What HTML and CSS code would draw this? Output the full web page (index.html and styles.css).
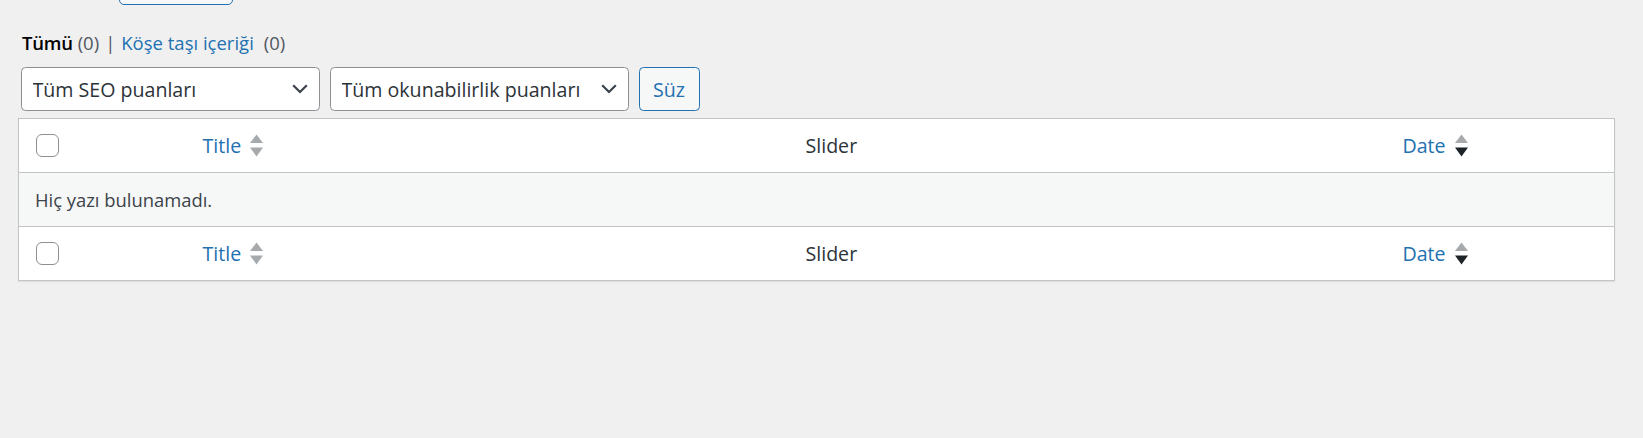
FILE: index.html
```html
<!DOCTYPE html>
<html lang="tr">
<head>
<meta charset="utf-8">
<title>Köşe taşı içeriği</title>
<link rel="stylesheet" href="styles.css">
</head>
<body>
<div class="wrap">
  <div class="title-row">
    <a class="page-title-action" href="#" aria-label="Yeni ekle"></a>
  </div>

  <ul class="subsubsub">
    <li><a class="current" href="#">Tümü</a> <span class="count">(0)</span></li>
    <li class="sep">|</li>
    <li><a href="#">Köşe taşı içeriği</a><span class="count gap">(0)</span></li>
  </ul>

  <div class="tablenav">
    <div class="select-wrap">
      <select class="filter">
        <option>Tüm SEO puanları</option>
      </select>
      <svg class="chev" width="16" height="10" viewBox="0 0 16 10"><path d="M1.2 1.2 L8 8 L14.8 1.2" fill="none" stroke="#3c434a" stroke-width="2.2"/></svg>
    </div>
    <div class="select-wrap">
      <select class="filter">
        <option>Tüm okunabilirlik puanları</option>
      </select>
      <svg class="chev" width="16" height="10" viewBox="0 0 16 10"><path d="M1.2 1.2 L8 8 L14.8 1.2" fill="none" stroke="#3c434a" stroke-width="2.2"/></svg>
    </div>
    <button class="button" type="button">Süz</button>
  </div>

  <table class="list">
    <colgroup>
      <col class="c-cb">
      <col class="c-title">
      <col class="c-slider">
      <col>
    </colgroup>
    <thead>
      <tr>
        <td class="check"><span class="cb"></span></td>
        <th><a class="sort" href="#"><span>Title</span>
          <svg width="13" height="23" viewBox="0 0 13 23"><polygon points="0,9 6.5,0.5 13,9" fill="#a7aaad"/><polygon points="0,13.5 13,13.5 6.5,22.5" fill="#a7aaad"/></svg></a></th>
        <th class="plain">Slider</th>
        <th><a class="sort" href="#"><span>Date</span>
          <svg width="13" height="23" viewBox="0 0 13 23"><polygon points="0,9 6.5,0.5 13,9" fill="#a7aaad"/><polygon points="0,13.5 13,13.5 6.5,22.5" fill="#1d2327"/></svg></a></th>
      </tr>
    </thead>
    <tbody>
      <tr class="empty"><td colspan="4">Hiç yazı bulunamadı.</td></tr>
    </tbody>
    <tfoot>
      <tr>
        <td class="check"><span class="cb"></span></td>
        <th><a class="sort" href="#"><span>Title</span>
          <svg width="13" height="23" viewBox="0 0 13 23"><polygon points="0,9 6.5,0.5 13,9" fill="#a7aaad"/><polygon points="0,13.5 13,13.5 6.5,22.5" fill="#a7aaad"/></svg></a></th>
        <th class="plain">Slider</th>
        <th><a class="sort" href="#"><span>Date</span>
          <svg width="13" height="23" viewBox="0 0 13 23"><polygon points="0,9 6.5,0.5 13,9" fill="#a7aaad"/><polygon points="0,13.5 13,13.5 6.5,22.5" fill="#1d2327"/></svg></a></th>
      </tr>
    </tfoot>
  </table>
</div>
</body>
</html>
```

FILE: styles.css
```css
html, body {
  margin: 0;
  padding: 0;
  background: #f0f0f1;
}

body {
  font-family: "Open Sans", "Noto Sans", sans-serif;
  color: #3c434a;
  height: 438px;
  overflow: hidden;
}

.wrap {
  padding-left: 18px;
  width: 1597px;
}

a {
  color: #2271b1;
  text-decoration: none;
}

.title-row {
  height: 5px;
  display: flex;
  align-items: flex-end;
}

.page-title-action {
  display: block;
  flex: none;
  margin-left: 101px;
  width: 114px;
  height: 43px;
  box-sizing: border-box;
  border: 1.5px solid #2271b1;
  border-radius: 5px;
  background: #f6f7f7;
}

.subsubsub {
  list-style: none;
  margin: 0;
  padding: 23px 0 0 4px;
  display: flex;
  align-items: flex-start;
  font-size: 18.5px;
  line-height: 30px;
  box-sizing: border-box;
  height: 62px;
  color: #50575e;
}

.subsubsub li {
  white-space: pre;
}

.subsubsub .current {
  color: #000;
  font-weight: 600;
  letter-spacing: -0.2px;
}

.subsubsub .sep {
  padding: 0 6px 0 6px;
}

.subsubsub .count {
  color: #50575e;
}

.subsubsub .gap {
  margin-left: 10px;
}

.tablenav {
  display: flex;
  gap: 10px;
  padding-left: 2.5px;
  height: 51px;
}

.select-wrap {
  position: relative;
  width: 299px;
  height: 44px;
}

.filter {
  appearance: none;
  -webkit-appearance: none;
  width: 100%;
  height: 100%;
  box-sizing: border-box;
  margin: 0;
  padding: 0 36px 0 11px;
  border: 1.5px solid #8c8f94;
  border-radius: 4.5px;
  background: #fff;
  color: #2c3338;
  font-family: "Open Sans", "Noto Sans", sans-serif;
  font-size: 19.6px;
}

.chev {
  position: absolute;
  right: 12px;
  top: 17px;
  pointer-events: none;
}

.button {
  height: 44px;
  width: 61px;
  margin-left: 0;
  box-sizing: border-box;
  padding: 0;
  border: 1.5px solid #2271b1;
  border-radius: 4.5px;
  background: #f6f7f7;
  color: #2271b1;
  font-family: "Open Sans", "Noto Sans", sans-serif;
  font-size: 19.6px;
}

.list {
  width: 1597px;
  table-layout: fixed;
  border-collapse: collapse;
  border: 1.5px solid #c3c4c7;
  background: #fff;
  box-shadow: 0 1.5px 1.5px rgba(0, 0, 0, 0.06);
}

.c-cb { width: 171px; }
.c-title { width: 603px; }
.c-slider { width: 597px; }

.list th,
.list td {
  height: 54px;
  padding: 0 0 0 13px;
  text-align: left;
  font-weight: 400;
  font-size: 19.6px;
  vertical-align: middle;
  box-sizing: border-box;
}

.list thead tr {
  border-bottom: 1.5px solid #c3c4c7;
}

.list tfoot tr {
  border-top: 1.5px solid #c3c4c7;
}

.list th.plain {
  color: #2c3338;
}

.list td.check {
  padding-left: 17px;
}

.cb {
  display: block;
  width: 21px;
  height: 21px;
  border: 1.5px solid #8c8f94;
  border-radius: 6px;
  background: #fff;
}

.sort {
  display: inline-flex;
  align-items: center;
  gap: 9px;
}

.sort svg {
  display: block;
  margin-top: -1px;
}

.empty td {
  background: #f6f7f7;
  color: #3c434a;
  font-size: 18.4px;
  padding-left: 16px;
}
```
